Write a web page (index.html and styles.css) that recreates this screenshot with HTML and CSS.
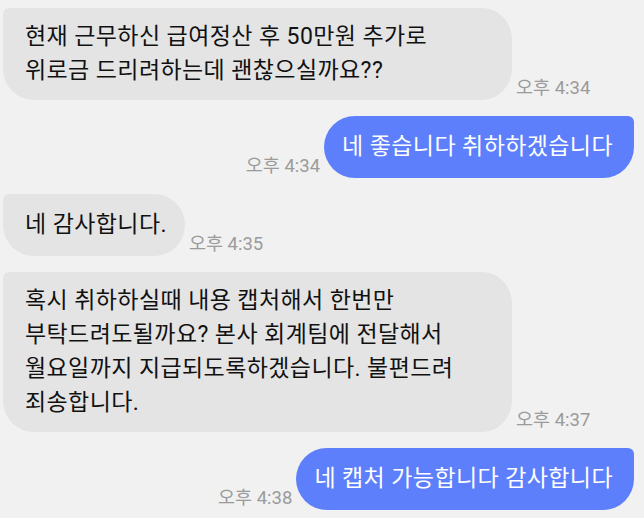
FILE: index.html
```html
<!DOCTYPE html>
<html lang="ko">
<head>
    <meta charset="UTF-8">
    <meta name="viewport" content="width=device-width, initial-scale=1.0">
    <title>대화</title>
    <link rel="stylesheet" href="styles.css">
</head>
<body>
    <div class="chat">
        <div class="row received">
            <div class="bubble">현재 근무하신 급여정산 후 50만원 추가로 위로금 드리려하는데 괜찮으실까요??</div>
            <span class="time">오후 4:34</span>
        </div>

        <div class="row sent">
            <span class="time">오후 4:34</span>
            <div class="bubble">네 좋습니다 취하하겠습니다</div>
        </div>

        <div class="row received">
            <div class="bubble">네 감사합니다.</div>
            <span class="time">오후 4:35</span>
        </div>

        <div class="row received">
            <div class="bubble">혹시 취하하실때 내용 캡처해서 한번만 부탁드려도될까요? 본사 회계팀에 전달해서 월요일까지 지급되도록하겠습니다. 불편드려 죄송합니다.</div>
            <span class="time">오후 4:37</span>
        </div>

        <div class="row sent">
            <span class="time">오후 4:38</span>
            <div class="bubble">네 캡처 가능합니다 감사합니다</div>
        </div>
    </div>
</body>
</html>
```

FILE: styles.css
```css
body {
    margin: 0;
    padding: 0;
    background-color: #f1f1f1;
    font-family: Roboto, "Noto Sans CJK KR", sans-serif;
}
.chat {
    display: flex;
    flex-direction: column;
    gap: 16px;
    padding: 8px 10px 0 3px;
}
.row {
    display: flex;
    align-items: flex-end;
}
.sent {
    justify-content: flex-end;
}
.bubble {
    max-width: 509px;
    min-height: 62px;
    box-sizing: border-box;
    display: flex;
    align-items: center;
    padding: 12px 22px;
    font-size: 23px;
    line-height: 34px;
    letter-spacing: 0.4px;
    color: #111;
    word-break: keep-all;
}
.received .bubble {
    background-color: #e4e4e4;
    border-radius: 6px 31px 31px 31px;
    padding-right: 18px;
}
.sent .bubble {
    background-color: #5d7ffc;
    color: #fff;
    border-radius: 31px 6px 31px 31px;
    padding: 12px 21px 12px 18px;
}
.time {
    margin: 0 4px 2px;
    font-size: 18.5px;
    line-height: 20px;
    color: #9b9b9b;
    white-space: nowrap;
}
```
